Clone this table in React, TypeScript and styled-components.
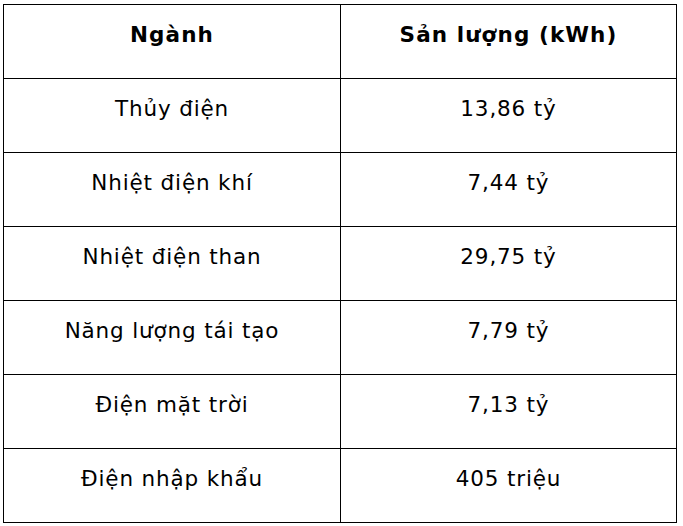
import styled, { createGlobalStyle } from "styled-components";

const GlobalStyle = createGlobalStyle`
  html, body {
    margin: 0;
    padding: 0;
    background: #ffffff;
  }
  body {
    font-family: "DejaVu Sans", Verdana, sans-serif;
    color: #000000;
  }
`;

const Page = styled.div`
  padding: 4px 6px 0 3px;
`;

const Table = styled.table`
  width: 673px;
  border-collapse: collapse;
  table-layout: fixed;
`;

const Cell = styled.td<{ $head?: boolean }>`
  border: 1px solid #000000;
  height: 74px;
  padding: 0 0 14px 0;
  box-sizing: border-box;
  text-align: center;
  vertical-align: middle;
  font-size: 21.5px;
  font-weight: ${({ $head }) => ($head ? 700 : 400)};
  letter-spacing: ${({ $head }) => ($head ? "1.1px" : "0.85px")};
`;

const rows: [string, string][] = [
  ["Thủy điện", "13,86 tỷ"],
  ["Nhiệt điện khí", "7,44 tỷ"],
  ["Nhiệt điện than", "29,75 tỷ"],
  ["Năng lượng tái tạo", "7,79 tỷ"],
  ["Điện mặt trời", "7,13 tỷ"],
  ["Điện nhập khẩu", "405 triệu"],
];

export default function App() {
  return (
    <>
      <GlobalStyle />
      <Page>
        <Table>
          <colgroup>
            <col style={{ width: "337px" }} />
            <col style={{ width: "336px" }} />
          </colgroup>
          <tbody>
            <tr>
              <Cell $head>Ngành</Cell>
              <Cell $head>Sản lượng (kWh)</Cell>
            </tr>
            {rows.map(([name, value]) => (
              <tr key={name}>
                <Cell>{name}</Cell>
                <Cell>{value}</Cell>
              </tr>
            ))}
          </tbody>
        </Table>
      </Page>
    </>
  );
}
